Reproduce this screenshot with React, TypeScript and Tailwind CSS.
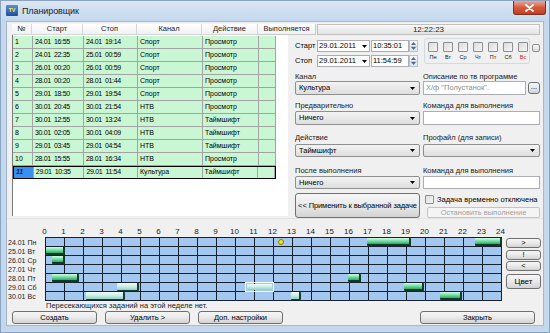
import React from 'react';

const tasks = [
  ['1', '24.01  16:55', '24.01  19:14', 'Спорт', 'Просмотр'],
  ['2', '24.01  22:35', '25.01  00:59', 'Спорт', 'Просмотр'],
  ['3', '26.01  00:20', '26.01  00:59', 'Спорт', 'Просмотр'],
  ['4', '28.01  00:20', '28.01  01:44', 'Спорт', 'Просмотр'],
  ['5', '29.01  18:50', '29.01  19:54', 'Спорт', 'Просмотр'],
  ['6', '30.01  20:45', '30.01  21:54', 'НТВ', 'Просмотр'],
  ['7', '30.01  12:55', '30.01  13:24', 'НТВ', 'Таймшифт'],
  ['8', '30.01  02:05', '30.01  04:09', 'НТВ', 'Таймшифт'],
  ['9', '29.01  03:45', '29.01  04:54', 'НТВ', 'Таймшифт'],
  ['10', '28.01  15:55', '28.01  16:34', 'НТВ', 'Просмотр'],
  ['11', '29.01  10:35', '29.01  11:54', 'Культура', 'Таймшифт'],
];

const colCls = ['w-[20px]', 'w-[51px]', 'w-[54px]', 'w-[65px]', 'w-[56px]', 'w-[17px]'];

type Bar = [number, number, 'g' | 'p' | 's'];

const days: { label: string; bars: Bar[] }[] = [
  { label: '24.01 Пн', bars: [[16.92, 19.23, 'g'], [22.58, 24, 'g']] },
  { label: '25.01 Вт', bars: [[0, 0.98, 'g']] },
  { label: '26.01 Ср', bars: [[0.33, 0.98, 'g']] },
  { label: '27.01 Чт', bars: [] },
  { label: '28.01 Пт', bars: [[0.33, 1.73, 'g'], [15.92, 16.57, 'g']] },
  { label: '29.01 Сб', bars: [[3.75, 4.9, 'p'], [10.58, 11.9, 's'], [18.83, 19.9, 'g']] },
  { label: '30.01 Вс', bars: [[2.08, 4.15, 'p'], [12.92, 13.4, 'p'], [20.75, 21.9, 'g']] },
];

const HOUR = 19;

const btn =
  'flex items-center justify-center rounded-[3px] border border-[#707070] bg-gradient-to-b from-[#f6f6f6] via-[#e9e9e9] to-[#d3d3d3] text-[7.5px] text-black';

function Down() {
  return (
    <svg width="5" height="3" viewBox="0 0 5 3" className="shrink-0">
      <path d="M0 0h5L2.5 3z" fill="#000" />
    </svg>
  );
}

function Combo({ value }: { value?: string }) {
  return (
    <div className="flex h-full items-center justify-between rounded-[2px] border border-[#8e8f8f] bg-gradient-to-b from-[#f3f3f3] to-[#dedede] pl-[3px] pr-[4px] text-[7.5px]">
      <span>{value}</span>
      <Down />
    </div>
  );
}

function Spinner() {
  return (
    <div className="flex h-full w-[9px] flex-col border border-[#b9c3cc] bg-gradient-to-b from-[#f4f7fa] to-[#dfe6ee]">
      <div className="flex flex-1 items-center justify-center border-b border-[#c7cfd8]">
        <svg width="5" height="3" viewBox="0 0 5 3">
          <path d="M0 3h5L2.5 0z" fill="#4d6c8e" />
        </svg>
      </div>
      <div className="flex flex-1 items-center justify-center">
        <svg width="5" height="3" viewBox="0 0 5 3">
          <path d="M0 0h5L2.5 3z" fill="#4d6c8e" />
        </svg>
      </div>
    </div>
  );
}

function DateRow({ label, date, time }: { label: string; date: string; time: string }) {
  return (
    <div className="flex h-[12px] items-center text-[7.5px]">
      <span className="w-[22px]">{label}</span>
      <div className="flex h-full w-[53px] items-center justify-between border border-[#abadb3] bg-white pl-[1px] pr-[2px]">
        <span>{date}</span>
        <Down />
      </div>
      <div className="ml-[1px] flex h-full w-[38px] items-center border border-[#abadb3] bg-white pl-[1px]">{time}</div>
      <Spinner />
    </div>
  );
}

function Label({ children }: { children: React.ReactNode }) {
  return <div className="h-[9px] text-[7.5px] leading-[9px] text-[#1a1a1a]">{children}</div>;
}

function TextBox({ children }: { children?: React.ReactNode }) {
  return (
    <div className="flex h-full items-center border border-[#abadb3] bg-white pl-[2px] text-[7.5px] text-[#8d8d8d]">
      {children}
    </div>
  );
}

function Check({ size = 'w-[10px] h-[10px]' }: { size?: string }) {
  return <div className={`${size} shrink-0 rounded-[1px] border border-[#8f8f8f] bg-gradient-to-br from-[#dcdcdc] to-[#f6f6f6]`} />;
}

function BarView({ bar }: { bar: Bar }) {
  const [from, to, kind] = bar;
  const style = { left: from * HOUR, width: (to - from) * HOUR };
  if (kind === 'g')
    return (
      <div
        className="absolute top-[0px] h-[8px] rounded-[1px] border-b-2 border-r-2 border-[#0e3b24] bg-gradient-to-b from-[#d6fbe6] via-[#6fe0a4] to-[#34a56a]"
        style={style}
      />
    );
  if (kind === 'p')
    return (
      <div
        className="absolute top-[0px] h-[8px] rounded-[1px] border-b border-r-2 border-[#1c3a34] bg-gradient-to-b from-[#f4fcfb] via-[#c9eee6] to-[#93d3c4]"
        style={style}
      />
    );
  return (
    <div className="absolute top-[-1px] h-[10px] border border-white" style={{ left: from * HOUR - 2, width: (to - from) * HOUR + 4 }}>
      <div className="mx-[1px] mt-[1px] h-[6px] bg-gradient-to-b from-[#f4fcfb] via-[#c4ede3] to-[#8ccfbf]" />
    </div>
  );
}

export default function App() {
  const hours = Array.from({ length: 25 }, (_, i) => i);
  const cells = Array.from({ length: 24 }, (_, i) => i);

  return (
    <div className="flex h-[333px] w-[550px] flex-col overflow-hidden border border-[#8aa3c0] bg-[#c3d7ed] font-['Liberation_Sans',Arial,sans-serif] text-black">
      {/* title bar */}
      <div className="flex h-[20px] shrink-0 items-start bg-gradient-to-b from-[#dbe7f5] to-[#c3d7ed]">
        <div className="mt-[4px] ml-[5px] flex h-[11px] w-[12px] items-center justify-center rounded-[1px] bg-gradient-to-b from-[#5a8ed6] to-[#1f4f9a] text-[5.5px] font-bold text-[#ffe46a]">
          TV
        </div>
        <span className="mt-[4px] ml-[4px] text-[9px] tracking-[-0.1px] text-[#1b1b1b]">Планировщик</span>
        <div className="ml-auto mr-[3px] flex h-[14px] w-[33px] items-center justify-center rounded-b-[3px] border border-t-0 border-[#7a3022] bg-gradient-to-b from-[#eaa897] via-[#d45a3f] to-[#c23f22]">
          <svg width="9" height="8" viewBox="0 0 9 8">
            <path d="M1 1l7 6M8 1L1 7" stroke="#fff" strokeWidth="1.8" strokeLinecap="round" />
          </svg>
        </div>
      </div>

      <div className="flex flex-1 px-[5px]">
        <div className="flex flex-1 flex-col border border-[#a5b8ce] bg-[#f0f0f0]">
          {/* header */}
          <div className="mt-[2px] ml-[5px] mr-[3px] flex h-[11px] text-[7.5px] text-[#1e1e1e]">
            {['№', 'Старт', 'Стоп', 'Канал', 'Действие'].map((h, i) => (
              <div
                key={h}
                className={`${colCls[i]} flex items-center justify-center border-r border-b border-[#d5d5d5] bg-gradient-to-b from-white to-[#f0f1f3]`}
              >
                {h}
              </div>
            ))}
            <div className="flex w-[58px] items-center justify-center border-r border-b border-[#c8c8c8] bg-gradient-to-b from-white to-[#f0f1f3]">
              Выполняется
            </div>
            <div className="ml-[1px] flex flex-1 items-center justify-center border border-[#c0c0c0] bg-gradient-to-b from-[#f8f8f8] to-[#e3e3e3] text-[8px]">
              12:22:23
            </div>
          </div>

          {/* table + properties */}
          <div className="flex h-[183px]">
            <div className="ml-[5px] h-[181px] w-[276px] border-l border-[#7a7a7a] bg-white pt-[1px]">
              {tasks.map((t, r) => {
                const sel = r === tasks.length - 1;
                return (
                  <div
                    key={t[0]}
                    className={`flex h-[13px] w-[263px] border-b bg-[#c9f6d3] text-[7px] ${sel ? 'border border-black' : 'border-[#a3a3a3]'}`}
                  >
                    {[...t, ''].map((c, i) => (
                      <div
                        key={i}
                        className={`${colCls[i]} flex items-center overflow-hidden whitespace-pre border-r border-[#a3a3a3] pl-[2px] ${i === 1 || i === 2 ? 'tracking-[-0.35px]' : ''} ${sel && i === 0 ? 'bg-[#3a8ef0] font-bold italic text-[#0b1a66]' : ''}`}
                      >
                        {c}
                      </div>
                    ))}
                  </div>
                );
              })}
            </div>

            <div className="flex flex-1 flex-col pl-[7px] pt-[3px]">
              <div className="flex h-[26px]">
                <div className="flex w-[123px] flex-col gap-[3px] pt-[2px]">
                  <DateRow label="Старт" date="29.01.2011" time="10:35:01" />
                  <DateRow label="Стоп" date="29.01.2011" time="11:54:59" />
                </div>
                <div className="ml-[6px] flex w-[106px] gap-[5px] rounded-[3px] border border-[#d3dbe2] pl-[3px] pt-[3px]">
                  {['Пн', 'Вт', 'Ср', 'Чт', 'Пт', 'Сб', 'Вс'].map((d) => (
                    <div key={d} className="flex w-[10px] flex-col items-center">
                      <Check />
                      <span className={`mt-[2px] text-[5.5px] leading-[6px] ${d === 'Вс' ? 'text-[#e02020]' : 'text-[#222]'}`}>{d}</span>
                    </div>
                  ))}
                </div>
                <div className="mt-[6px] ml-[2px] h-[8px] w-[8px] rounded-[2px] border border-[#8f8f8f] bg-gradient-to-b from-[#f8f8f8] to-[#dcdcdc]" />
              </div>

              <div className="mt-[8px] flex gap-[3px]">
                <div className="flex w-[125px] flex-col">
                  <Label>Канал</Label>
                  <div className="h-[14px]">
                    <Combo value="Культура" />
                  </div>
                </div>
                <div className="flex w-[117px] flex-col">
                  <Label>Описание по тв программе</Label>
                  <div className="flex h-[14px] gap-[2px]">
                    <div className="flex-1">
                      <TextBox>Х/ф "Полустанок".</TextBox>
                    </div>
                    <div className={`${btn} mt-[1px] h-[12px] w-[12px] pb-[3px]`}>...</div>
                  </div>
                </div>
              </div>

              <div className="mt-[6px] flex gap-[3px]">
                <div className="flex w-[125px] flex-col">
                  <Label>Предварительно</Label>
                  <div className="mt-[1px] h-[14px]">
                    <Combo value="Ничего" />
                  </div>
                </div>
                <div className="flex w-[117px] flex-col">
                  <Label>Команда для выполнения</Label>
                  <div className="mt-[1px] h-[14px]">
                    <TextBox />
                  </div>
                </div>
              </div>

              <div className="mt-[8px] flex gap-[3px]">
                <div className="flex w-[125px] flex-col">
                  <Label>Действие</Label>
                  <div className="mt-[2px] h-[13px]">
                    <Combo value="Таймшифт" />
                  </div>
                </div>
                <div className="flex w-[117px] flex-col">
                  <Label>Профайл (для записи)</Label>
                  <div className="mt-[2px] h-[13px]">
                    <Combo />
                  </div>
                </div>
              </div>

              <div className="mt-[9px] flex gap-[3px]">
                <div className="flex w-[125px] flex-col">
                  <Label>После выполнения</Label>
                  <div className="mt-[1px] h-[13px]">
                    <Combo value="Ничего" />
                  </div>
                </div>
                <div className="flex w-[117px] flex-col">
                  <Label>Команда для выполнения</Label>
                  <div className="mt-[1px] h-[13px]">
                    <TextBox />
                  </div>
                </div>
              </div>

              <div className="mt-[4px] flex gap-[3px]">
                <div className={`${btn} h-[25px] w-[125px] whitespace-nowrap tracking-[-0.1px]`}>&lt;&lt; Применить к выбранной задаче</div>
                <div className="flex w-[117px] flex-col">
                  <div className="mt-[2px] flex h-[9px] items-center gap-[3px] pl-[2px] text-[7.5px]">
                    <Check size="w-[9px] h-[9px]" />
                    <span>Задача временно отключена</span>
                  </div>
                  <div className="mt-[3px] ml-[4px] flex h-[11px] items-center justify-center rounded-[2px] border border-[#c4c4c4] bg-[#f4f4f4] text-[7.5px] text-[#a3a3a3]">
                    Остановить выполнение
                  </div>
                </div>
              </div>
            </div>
          </div>

          {/* timeline */}
          <div className="flex h-[92px] flex-col border-t border-[#e2e2e2] pt-[8px]">
            <div className="ml-[28px] flex h-[10px] text-[8px] leading-[9px] text-[#1a1a1a]">
              {hours.map((h) => (
                <div key={h} className="w-[19px] text-center">
                  {h}
                </div>
              ))}
            </div>
            <div className="flex">
              <div className="w-[38px] pt-[1px] pl-[1px] text-[7px] leading-[9px] text-[#1a1a1a]">
                {days.map((d) => (
                  <div key={d.label} className="h-[9px] whitespace-nowrap">
                    {d.label}
                  </div>
                ))}
              </div>
              <div className="flex flex-col">
                <div className="w-[457px] border-t border-l border-[#17202e]">
                  {days.map((d, r) => (
                    <div key={d.label} className="relative flex h-[9px]">
                      {cells.map((c) => (
                        <div key={c} className="h-[9px] w-[19px] border-r border-b border-[#17202e] bg-[#a3c7ef]" />
                      ))}
                      {d.bars.map((b, i) => (
                        <BarView key={i} bar={b} />
                      ))}
                      {r === 0 && (
                        <div
                          className="absolute top-[1px] h-[6px] w-[6px] rounded-full border border-[#8d7d00] bg-[#f7e51c]"
                          style={{ left: 12.37 * HOUR - 3 }}
                        />
                      )}
                    </div>
                  ))}
                </div>
                <div className="h-[9px] pl-[1px] text-[7.5px] leading-[9px] text-[#1a1a1a]">
                  Пересекающихся заданий на этой неделе нет.
                </div>
              </div>
              <div className="ml-[4px] flex w-[35px] flex-col pt-[1px]">
                <div className={`${btn} h-[10px]`}>&gt;</div>
                <div className={`${btn} mt-[2px] h-[10px]`}>!</div>
                <div className={`${btn} mt-[1px] h-[10px]`}>&lt;</div>
                <div className={`${btn} mt-[3px] h-[15px] text-[8px]`}>Цвет</div>
              </div>
            </div>
          </div>

          {/* bottom buttons */}
          <div className="mt-[1px] flex h-[13px] pl-[5px] pr-[8px]">
            <div className={`${btn} w-[85px]`}>Создать</div>
            <div className={`${btn} ml-[8px] w-[85px]`}>Удалить &gt;</div>
            <div className={`${btn} ml-[8px] w-[85px]`}>Доп. настройки</div>
            <div className={`${btn} ml-auto w-[115px]`}>Закрыть</div>
          </div>
        </div>
      </div>
      <div className="h-[6px] shrink-0" />
    </div>
  );
}
